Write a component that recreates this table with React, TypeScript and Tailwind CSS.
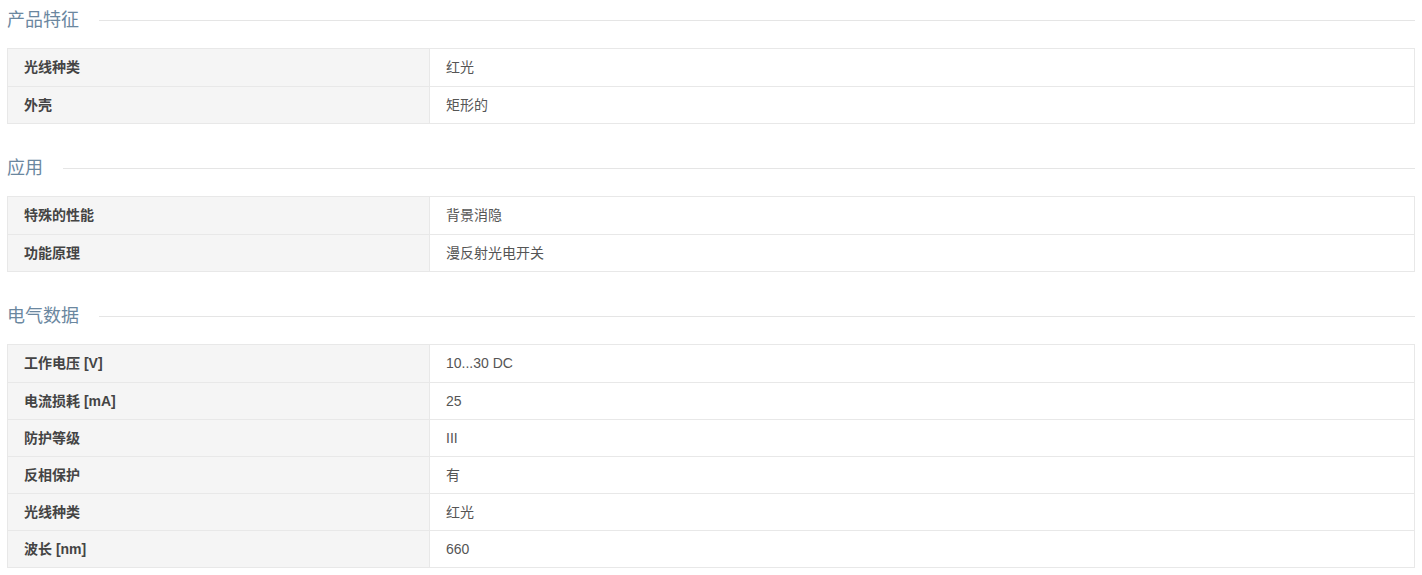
const sections: { title: string; rows: [string, string][] }[] = [
  {
    title: '产品特征',
    rows: [
      ['光线种类', '红光'],
      ['外壳', '矩形的'],
    ],
  },
  {
    title: '应用',
    rows: [
      ['特殊的性能', '背景消隐'],
      ['功能原理', '漫反射光电开关'],
    ],
  },
  {
    title: '电气数据',
    rows: [
      ['工作电压 [V]', '10...30 DC'],
      ['电流损耗 [mA]', '25'],
      ['防护等级', 'III'],
      ['反相保护', '有'],
      ['光线种类', '红光'],
      ['波长 [nm]', '660'],
    ],
  },
];

export default function App() {
  return (
    <div
      className="bg-white px-[7px] pt-[8px]"
      style={{ fontFamily: '"Liberation Sans", "Noto Sans CJK SC", sans-serif' }}
    >
      {sections.map((s) => (
        <section key={s.title} className="mb-[32px]">
          <div className="flex items-center h-[24px]">
            <h3 className="text-[18px] leading-[24px] text-[#6b879f] whitespace-nowrap">{s.title}</h3>
            <div className="flex-1 ml-[20px] h-px bg-[#e5e5e5]" />
          </div>
          <div className="mt-[16px] border border-[#e8e8e8]">
            {s.rows.map(([k, v], i) => (
              <div
                key={i}
                className={`flex h-[37px] text-[14px] ${i > 0 ? 'border-t border-[#e8e8e8]' : ''}`}
              >
                <div className="w-[422px] shrink-0 bg-[#f5f5f5] border-r border-[#e8e8e8] pl-[16px] flex items-center font-bold text-[#444]">
                  {k}
                </div>
                <div className="flex-1 pl-[16px] flex items-center text-[#555]">{v}</div>
              </div>
            ))}
          </div>
        </section>
      ))}
    </div>
  );
}
